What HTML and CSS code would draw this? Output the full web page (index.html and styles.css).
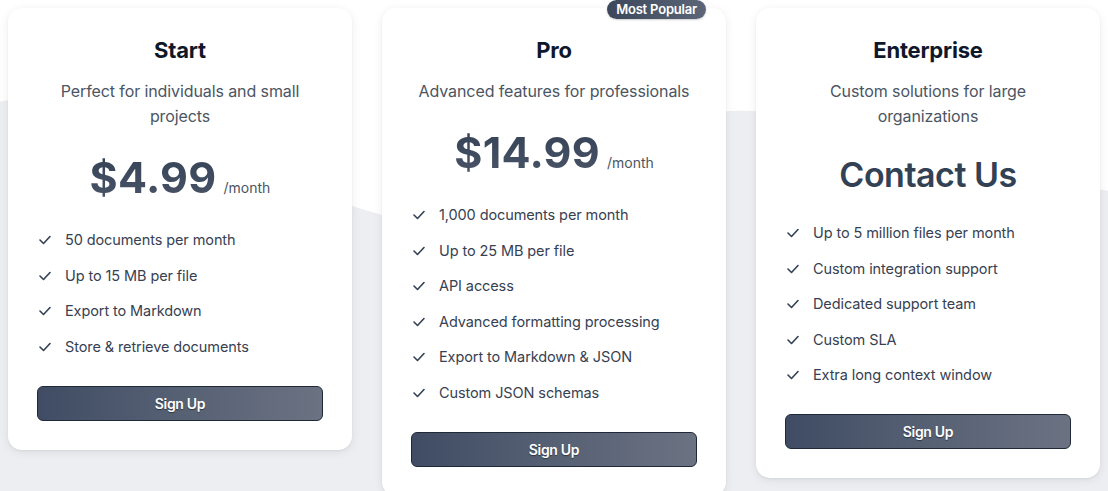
FILE: index.html
```html
<!DOCTYPE html>
<html lang="en">
<head>
<meta charset="utf-8">
<title>Pricing</title>
<link rel="stylesheet" href="styles.css">
</head>
<body>
<div class="page">
  <svg class="wave" viewBox="0 0 1108 491" preserveAspectRatio="none" aria-hidden="true">
    <path d="M0 99 C80 80 300 200 430 220 C560 220 620 108 740 108 C860 108 1000 170 1108 186 L1108 491 L0 491 Z" fill="#eceef1"/>
  </svg>
  <div class="plans">
    <section class="card">
      <h2 class="title">Start</h2>
      <p class="desc">Perfect for individuals and small projects</p>
      <div class="price"><span class="amount">$4.99</span><span class="per">/month</span></div>
      <ul class="features">
        <li><svg class="check" viewBox="0 0 12 10"><polyline points="1,5 4.5,8.5 11,1.5"/></svg>50 documents per month</li>
        <li><svg class="check" viewBox="0 0 12 10"><polyline points="1,5 4.5,8.5 11,1.5"/></svg>Up to 15 MB per file</li>
        <li><svg class="check" viewBox="0 0 12 10"><polyline points="1,5 4.5,8.5 11,1.5"/></svg>Export to Markdown</li>
        <li><svg class="check" viewBox="0 0 12 10"><polyline points="1,5 4.5,8.5 11,1.5"/></svg>Store &amp; retrieve documents</li>
      </ul>
      <button class="btn">Sign Up</button>
    </section>
    <section class="card">
      <span class="badge">Most Popular</span>
      <h2 class="title">Pro</h2>
      <p class="desc">Advanced features for professionals</p>
      <div class="price"><span class="amount">$14.99</span><span class="per">/month</span></div>
      <ul class="features">
        <li><svg class="check" viewBox="0 0 12 10"><polyline points="1,5 4.5,8.5 11,1.5"/></svg>1,000 documents per month</li>
        <li><svg class="check" viewBox="0 0 12 10"><polyline points="1,5 4.5,8.5 11,1.5"/></svg>Up to 25 MB per file</li>
        <li><svg class="check" viewBox="0 0 12 10"><polyline points="1,5 4.5,8.5 11,1.5"/></svg>API access</li>
        <li><svg class="check" viewBox="0 0 12 10"><polyline points="1,5 4.5,8.5 11,1.5"/></svg>Advanced formatting processing</li>
        <li><svg class="check" viewBox="0 0 12 10"><polyline points="1,5 4.5,8.5 11,1.5"/></svg>Export to Markdown &amp; JSON</li>
        <li><svg class="check" viewBox="0 0 12 10"><polyline points="1,5 4.5,8.5 11,1.5"/></svg>Custom JSON schemas</li>
      </ul>
      <button class="btn">Sign Up</button>
    </section>
    <section class="card">
      <h2 class="title">Enterprise</h2>
      <p class="desc">Custom solutions for large organizations</p>
      <div class="contact">Contact Us</div>
      <ul class="features">
        <li><svg class="check" viewBox="0 0 12 10"><polyline points="1,5 4.5,8.5 11,1.5"/></svg>Up to 5 million files per month</li>
        <li><svg class="check" viewBox="0 0 12 10"><polyline points="1,5 4.5,8.5 11,1.5"/></svg>Custom integration support</li>
        <li><svg class="check" viewBox="0 0 12 10"><polyline points="1,5 4.5,8.5 11,1.5"/></svg>Dedicated support team</li>
        <li><svg class="check" viewBox="0 0 12 10"><polyline points="1,5 4.5,8.5 11,1.5"/></svg>Custom SLA</li>
        <li><svg class="check" viewBox="0 0 12 10"><polyline points="1,5 4.5,8.5 11,1.5"/></svg>Extra long context window</li>
      </ul>
      <button class="btn">Sign Up</button>
    </section>
  </div>
</div>
</body>
</html>
```

FILE: styles.css
```css
* { box-sizing: border-box; }

html, body {
  margin: 0;
  background: #ffffff;
  font-family: Inter, "Noto Sans", sans-serif;
  color: #374151;
}

.page {
  position: relative;
  min-height: 491px;
  padding: 8px;
  overflow: hidden;
}

.wave {
  position: absolute;
  left: 0;
  top: 0;
  width: 100%;
  height: 100%;
  z-index: 0;
}

.plans {
  position: relative;
  z-index: 1;
  display: grid;
  grid-template-columns: repeat(3, 344px);
  column-gap: 30px;
  align-items: start;
}

.card {
  position: relative;
  background: #ffffff;
  border-radius: 14px;
  box-shadow: 0 2px 10px rgba(15, 23, 42, 0.08), 0 1px 2px rgba(15, 23, 42, 0.05);
  padding: 26px 29px 29px;
  display: flex;
  flex-direction: column;
  align-items: center;
  text-align: center;
}

.badge {
  position: absolute;
  top: -8px;
  right: 20px;
  height: 19px;
  padding: 0 9px;
  border-radius: 10px;
  background: linear-gradient(90deg, #3c475b, #5c6678);
  color: #ffffff;
  font-size: 13px;
  font-weight: 600;
  line-height: 19px;
  letter-spacing: -0.2px;
  box-shadow: 0 1px 2px rgba(0,0,0,0.2);
}

.title {
  margin: 0;
  font-size: 22px;
  line-height: 32px;
  font-weight: 700;
  color: #0f172a;
  letter-spacing: -0.2px;
}

.desc {
  margin: 13px 0 0;
  font-size: 16px;
  line-height: 25px;
  color: #4b5563;
  letter-spacing: -0.1px;
}

.price {
  display: flex;
  align-items: baseline;
  justify-content: center;
  gap: 7px;
  margin-top: 20px;
  line-height: 56px;
}

.amount {
  font-size: 43px;
  font-weight: 700;
  letter-spacing: 0.3px;
  background: linear-gradient(180deg, #334155, #4b5568);
  -webkit-background-clip: text;
  background-clip: text;
  color: transparent;
}

.per {
  font-size: 14px;
  color: #4b5563;
}

.contact {
  margin: 18px 0 6px;
  font-size: 34px;
  line-height: 56px;
  font-weight: 600;
  color: #334155;
  letter-spacing: -0.5px;
}

.features {
  list-style: none;
  margin: 12px 0 0;
  padding: 0 0 0 2px;
  align-self: stretch;
  display: flex;
  flex-direction: column;
  gap: 11.5px;
  text-align: left;
}

.features li {
  display: flex;
  align-items: center;
  gap: 14px;
  font-size: 14.5px;
  line-height: 24px;
  color: #374151;
  letter-spacing: -0.1px;
}

.check {
  width: 12px;
  height: 10px;
  flex: none;
  fill: none;
  stroke: #334155;
  stroke-width: 1.6;
  stroke-linecap: round;
  stroke-linejoin: round;
}

.btn {
  align-self: stretch;
  margin-top: 27px;
  height: 35px;
  border: 1px solid #1f2937;
  border-radius: 6px;
  background: linear-gradient(90deg, #3f4c63 0%, #525d71 40%, #6b7282 100%);
  color: #ffffff;
  font-family: inherit;
  font-size: 14px;
  font-weight: 600;
  letter-spacing: -0.3px;
  text-shadow: 0 1px 1px rgba(0,0,0,0.45);
  cursor: pointer;
}
```
